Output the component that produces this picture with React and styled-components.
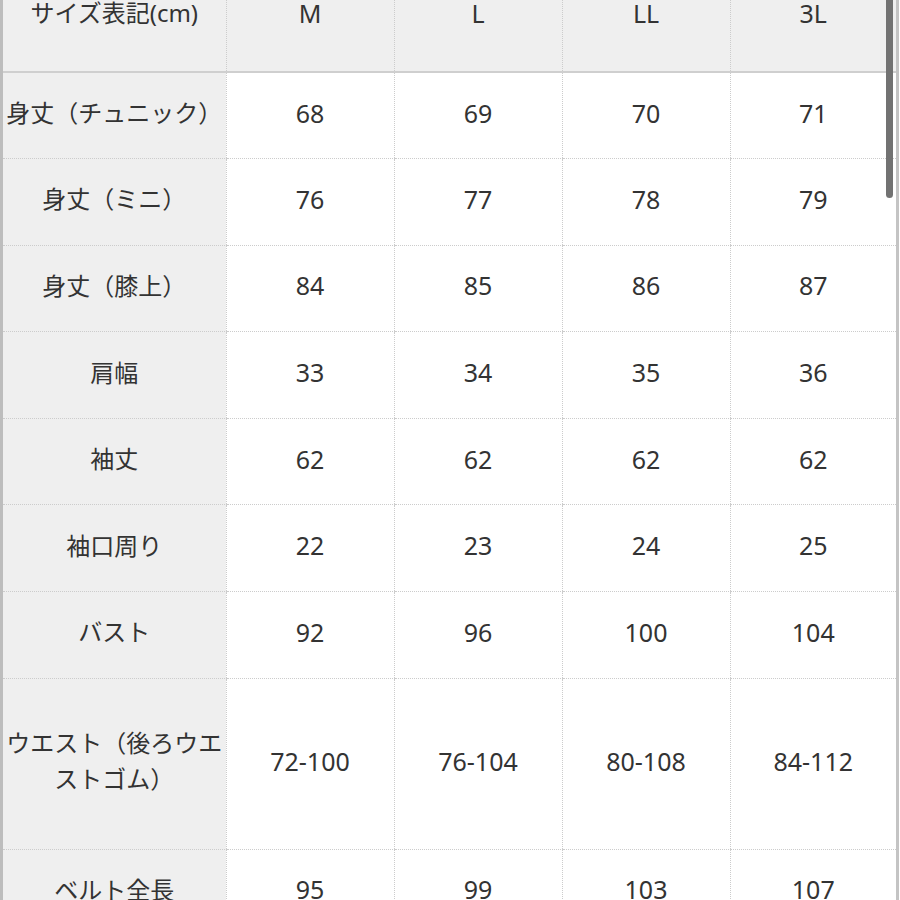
import React from "react";
import styled, { createGlobalStyle } from "styled-components";

const GlobalStyle = createGlobalStyle`
  html, body {
    margin: 0;
    padding: 0;
    background: #ffffff;
  }
  body {
    font-family: "Noto Sans", "Noto Sans CJK JP", sans-serif;
    color: #333333;
  }
`;

const Frame = styled.div`
  position: relative;
  width: 893px;
  height: 900px;
  overflow: hidden;
  border-left: 3px solid #bdbdbd;
  border-right: 3px solid #c4c4c4;
`;

const Table = styled.table`
  width: 893px;
  border-collapse: collapse;
  table-layout: fixed;
`;

const Col = styled.col`
  width: ${(p) => p.$w}px;
`;

const HeadCell = styled.th`
  height: 71px;
  padding: 0;
  background: #efefef;
  font-weight: normal;
  font-size: ${(p) => (p.$label ? "24px" : "25px")};
  line-height: 26px;
  vertical-align: top;
  text-align: center;
  border-bottom: 2px solid #cfcfcf;
  border-left: ${(p) => (p.$label ? "none" : "1px dotted #cccccc")};
`;

const Row = styled.tr`
  height: ${(p) => (p.$tall ? "171px" : "86.6px")};
`;

const LabelCell = styled.td`
  padding: 0 2px 5px;
  background: #efefef;
  font-size: 24px;
  line-height: 36px;
  text-align: center;
  vertical-align: middle;
  border-bottom: 1px dotted #cccccc;
`;

const ValueCell = styled.td`
  padding: 0 0 6px;
  background: #ffffff;
  font-size: 25px;
  text-align: center;
  vertical-align: middle;
  border-bottom: 1px dotted #cccccc;
  border-left: 1px dotted #cccccc;
`;

const Scrollbar = styled.div`
  position: absolute;
  top: 0;
  right: 3px;
  width: 7px;
  height: 198px;
  border-radius: 0 0 4px 4px;
  background: #727272;
`;

const sizes = ["M", "L", "LL", "3L"];
const colWidths = [223, 168, 168, 168, 166];

const rows = [
  { label: "身丈（チュニック）", values: ["68", "69", "70", "71"] },
  { label: "身丈（ミニ）", values: ["76", "77", "78", "79"] },
  { label: "身丈（膝上）", values: ["84", "85", "86", "87"] },
  { label: "肩幅", values: ["33", "34", "35", "36"] },
  { label: "袖丈", values: ["62", "62", "62", "62"] },
  { label: "袖口周り", values: ["22", "23", "24", "25"] },
  { label: "バスト", values: ["92", "96", "100", "104"] },
  {
    label: "ウエスト（後ろウエストゴム）",
    values: ["72-100", "76-104", "80-108", "84-112"],
    tall: true,
  },
  { label: "ベルト全長", values: ["95", "99", "103", "107"] },
];

export default function App() {
  return (
    <>
      <GlobalStyle />
      <Frame>
        <Table>
          <colgroup>
            {colWidths.map((w, i) => (
              <Col key={i} $w={w} />
            ))}
          </colgroup>
          <thead>
            <tr>
              <HeadCell $label>サイズ表記(cm)</HeadCell>
              {sizes.map((s) => (
                <HeadCell key={s}>{s}</HeadCell>
              ))}
            </tr>
          </thead>
          <tbody>
            {rows.map((r) => (
              <Row key={r.label} $tall={r.tall}>
                <LabelCell>{r.label}</LabelCell>
                {r.values.map((v, i) => (
                  <ValueCell key={i}>{v}</ValueCell>
                ))}
              </Row>
            ))}
          </tbody>
        </Table>
        <Scrollbar />
      </Frame>
    </>
  );
}
